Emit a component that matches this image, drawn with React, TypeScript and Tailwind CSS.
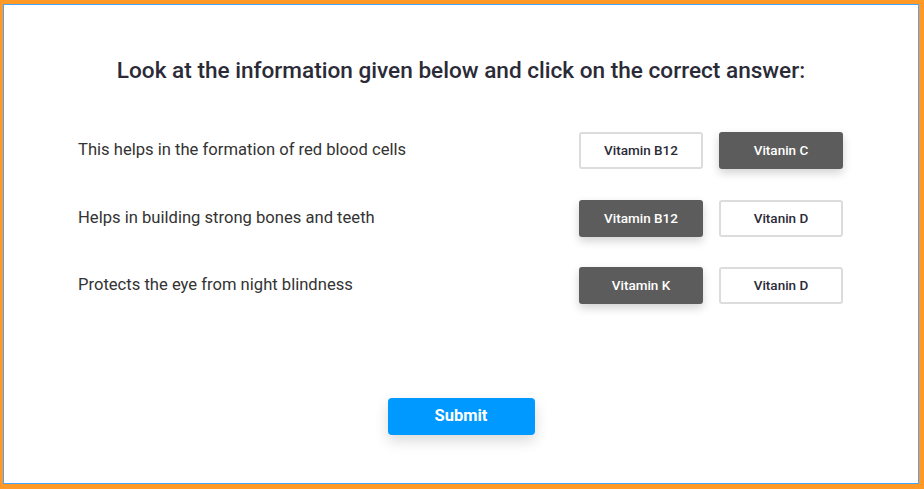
const rows = [
  { q: 'This helps in the formation of red blood cells', a: ['Vitamin B12', 'Vitanin C'], sel: 1 },
  { q: 'Helps in building strong bones and teeth', a: ['Vitamin B12', 'Vitanin D'], sel: 0 },
  { q: 'Protects the eye from night blindness', a: ['Vitamin K', 'Vitanin D'], sel: 0 },
]

export default function App() {
  return (
    <div className="w-[924px] h-[489px] bg-[#ff9a26] pt-[4px] pl-[3px] pr-[5px] pb-[5px]" style={{ fontFamily: 'Roboto, "Liberation Sans", sans-serif' }}>
      <div className="h-full border border-[#4aa3ff] bg-white flex flex-col">
        <h1 className="mt-[51px] text-center text-[22.6px] font-medium text-[#2b2b38] leading-[30px]">
          Look at the information given below and click on the correct answer:
        </h1>
        <div className="mt-[46px] pl-[74px] pr-[75px] flex flex-col gap-[30.5px]">
          {rows.map((r, i) => (
            <div key={i} className="flex items-center justify-between">
              <span className="text-[16.6px] text-[#333]">{r.q}</span>
              <div className="flex gap-[16px]">
                {r.a.map((a, j) =>
                  j === r.sel ? (
                    <button key={j} className="w-[124px] h-[37px] rounded-[3px] bg-[#5c5c5c] text-white text-[13.5px] font-medium shadow-[0_4px_10px_rgba(0,0,0,0.18)]">
                      {a}
                    </button>
                  ) : (
                    <button key={j} className="w-[124px] h-[37px] rounded-[3px] bg-white border-2 border-[#dcdcdc] text-[#2b2b38] text-[13.5px] font-medium">
                      {a}
                    </button>
                  ),
                )}
              </div>
            </div>
          ))}
        </div>
        <div className="mt-[94px] flex justify-center">
          <button className="w-[147px] h-[37px] rounded-[4px] bg-[#0099ff] text-white text-[16.5px] font-bold shadow-[0_6px_14px_rgba(0,0,0,0.15)]">
            Submit
          </button>
        </div>
      </div>
    </div>
  )
}
